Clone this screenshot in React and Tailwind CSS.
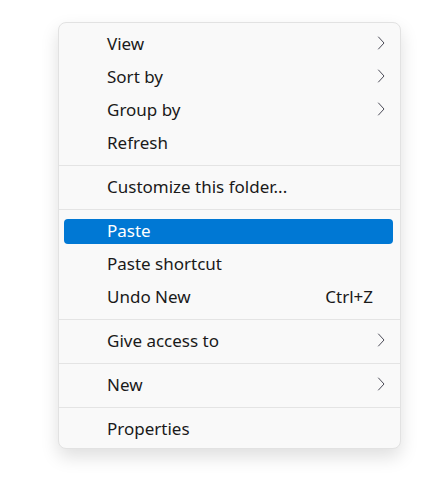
import React from 'react';

const Chevron = () => (
  <svg width="8" height="14" viewBox="0 0 8 14" fill="none" className="shrink-0">
    <path d="M1.5 1 L7 7 L1.5 13" stroke="#4b4b57" strokeWidth="1" strokeLinecap="round" strokeLinejoin="round" />
  </svg>
);

const menu = [
  { label: 'View', sub: true },
  { label: 'Sort by', sub: true },
  { label: 'Group by', sub: true },
  { label: 'Refresh' },
  'sep',
  { label: 'Customize this folder...' },
  'sep',
  { label: 'Paste', active: true },
  { label: 'Paste shortcut' },
  { label: 'Undo New', shortcut: 'Ctrl+Z' },
  'sep',
  { label: 'Give access to', sub: true },
  'sep',
  { label: 'New', sub: true },
  'sep',
  { label: 'Properties' },
];

const MenuItem = ({ item }) => (
  <div className="h-[33px] flex items-center">
    <div
      className={`h-[25px] w-full rounded-[4px] flex items-center pl-[43px] ${
        item.active ? 'bg-[#0078d4] text-white' : 'text-[#1a1a1a]'
      }`}
    >
      <span className="flex-1 leading-[25px] mb-[2px]">{item.label}</span>
      {item.shortcut && <span className="pr-[20px] leading-[25px] mb-[2px]">{item.shortcut}</span>}
      {item.sub && (
        <span className="pr-[8px] mb-[4px] flex items-center">
          <Chevron />
        </span>
      )}
    </div>
  </div>
);

export default function App() {
  return (
    <div className="w-[432px] h-[477px] bg-white pt-[22px] pl-[58px]" style={{ fontFamily: '"Noto Sans", "Open Sans", sans-serif' }}>
      <div className="w-[343px] bg-[#f9f9f9] border border-[#e2e2e2] rounded-[8px] pt-[5px] pb-[2px] pl-[5px] pr-0 text-[17px] shadow-[0_8px_18px_rgba(0,0,0,0.13)]">
        {menu.map((item, i) =>
          item === 'sep' ? (
            <div key={i} className="h-[11px] flex items-center -ml-[5px]">
              <div className="h-px w-full bg-[#e4e4e4]" />
            </div>
          ) : (
            <div key={i} className="pr-[7px]">
              <MenuItem item={item} />
            </div>
          )
        )}
      </div>
    </div>
  );
}
